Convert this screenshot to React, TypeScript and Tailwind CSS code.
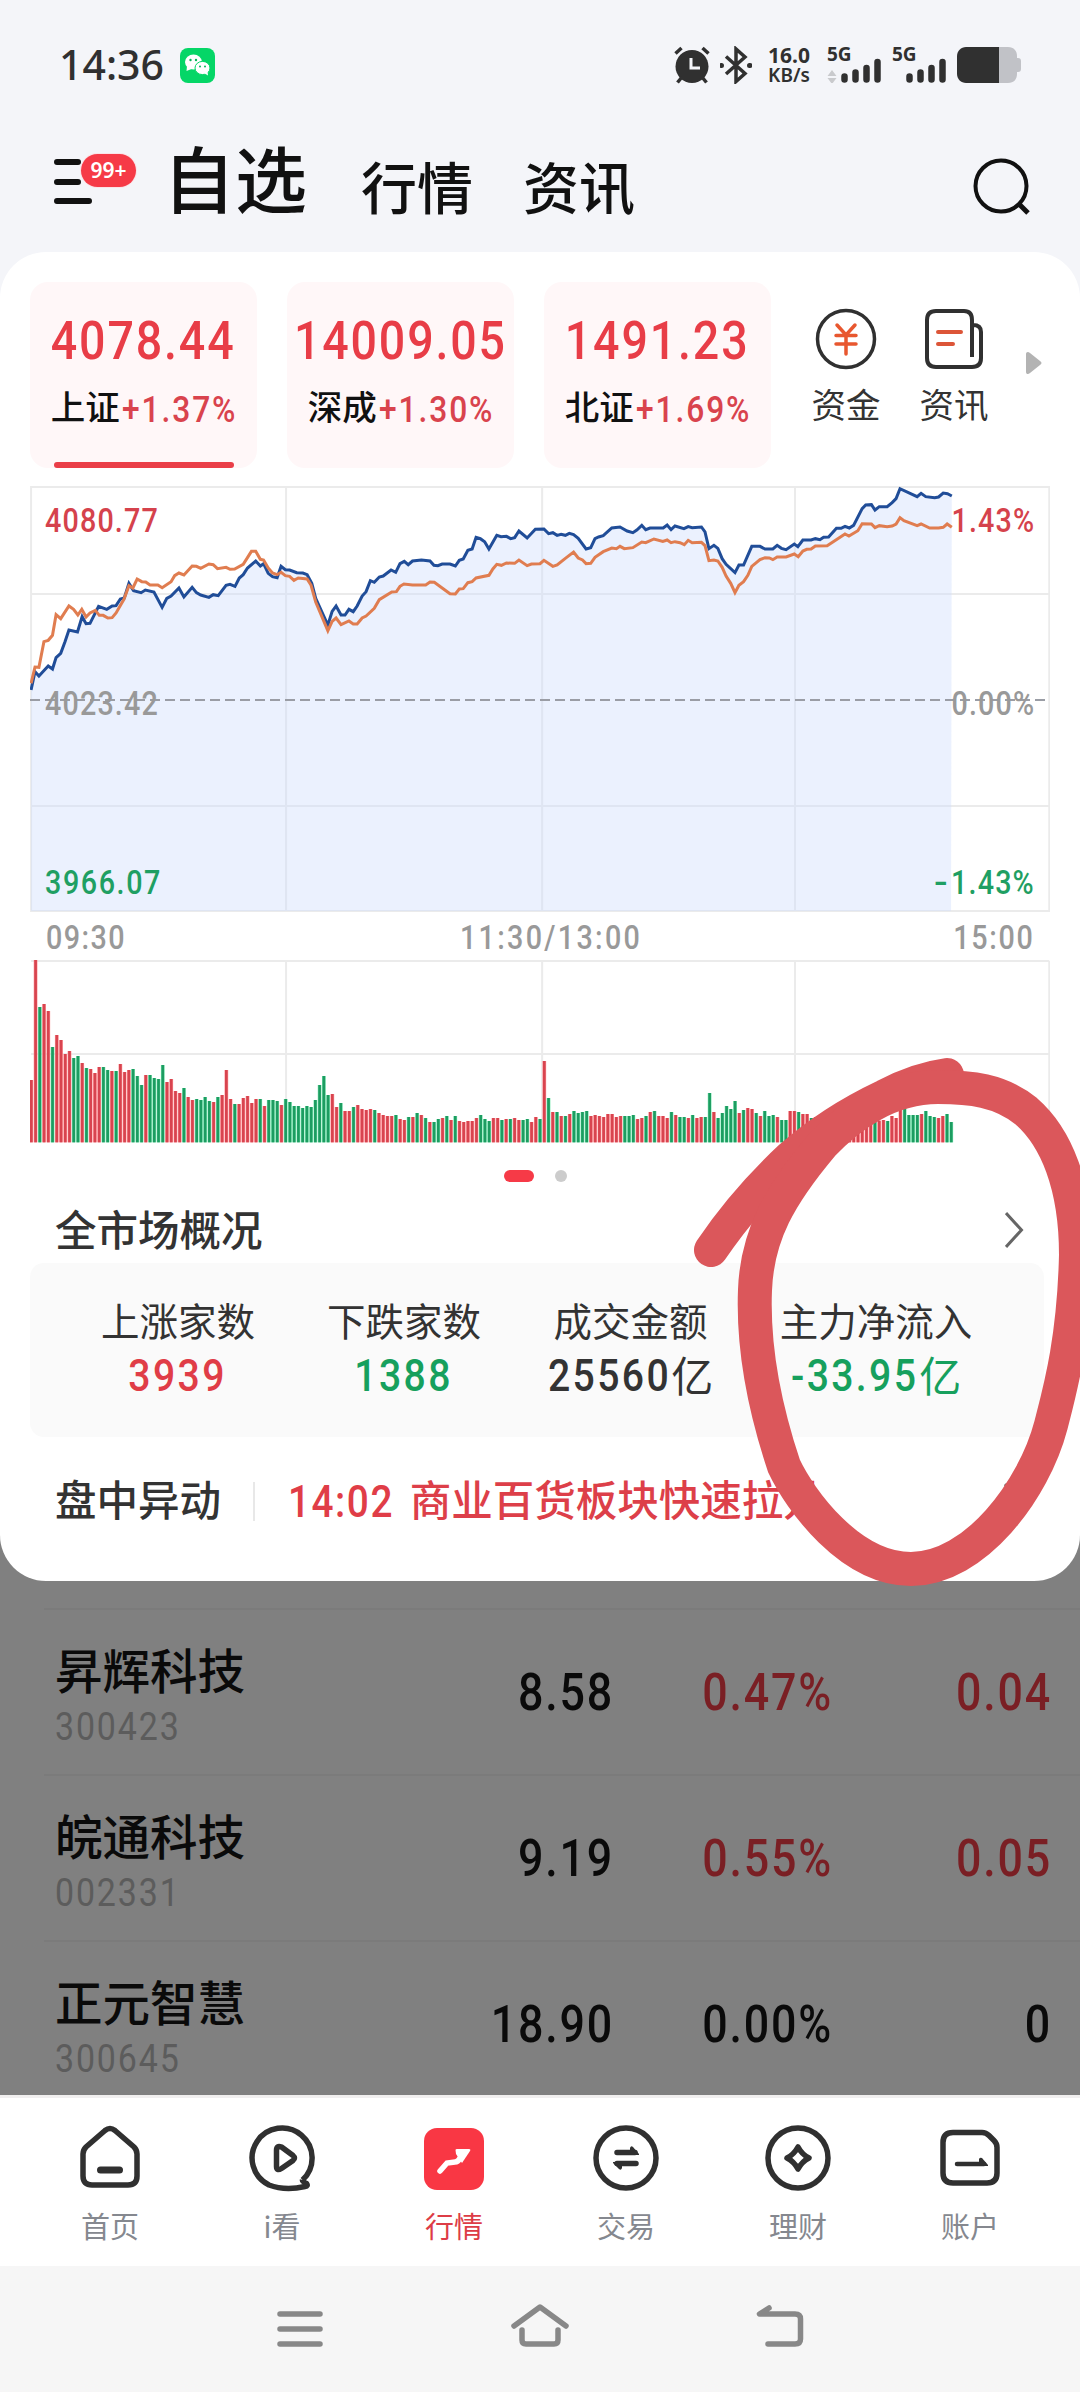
import type { ReactNode } from 'react';
import clsx from 'clsx';

type Point = [number, number];

// chart space: 2.8 units per px horizontally, 3 per px vertically
const NOON_OFFSET = 1456;
const MINUTE = 11.87;
const VOLUME_BASE = 637;

const BLUE_AM: Point[] = [
  [87, 660], [98, 605], [109, 618], [122, 603], [135, 588], [147, 597], [157, 563], [170, 550], [182, 515], [193, 480],
  [217, 486], [230, 440], [241, 461], [252, 460], [276, 409], [299, 418], [314, 408], [325, 407], [337, 387], [348, 384],
  [361, 340], [374, 362], [395, 368], [407, 360], [431, 366], [454, 412], [467, 385], [479, 378], [501, 354], [515, 381],
  [538, 352], [550, 368], [562, 375], [585, 382], [597, 374], [611, 377], [633, 346], [644, 343], [658, 349], [670, 324],
  [681, 314], [693, 294], [716, 273], [729, 288], [738, 281], [751, 310], [763, 320], [776, 323], [787, 289], [799, 299],
  [811, 300], [831, 308], [848, 309], [860, 314], [873, 340], [884, 385], [918, 465], [930, 424], [941, 408], [955, 435],
  [966, 435], [977, 418], [989, 425], [1000, 408], [1014, 378], [1025, 365], [1037, 332], [1048, 337], [1062, 321],
  [1073, 318], [1095, 300], [1108, 307], [1120, 281], [1132, 274], [1143, 284], [1155, 273], [1180, 270], [1204, 273],
  [1215, 286], [1226, 287], [1238, 282], [1260, 282], [1275, 288], [1286, 271], [1297, 267], [1310, 241], [1322, 237],
  [1333, 202], [1345, 206], [1357, 215], [1369, 237], [1391, 196], [1403, 200], [1418, 199], [1430, 206], [1441, 203],
  [1453, 183], [1476, 204], [1499, 178], [1523, 177], [1536, 191],
];

const BLUE_PM: Point[] = [
  [92, 188], [104, 196], [115, 193], [127, 196], [138, 190], [150, 194], [163, 205], [185, 237], [198, 233], [210, 206],
  [220, 201], [233, 197], [257, 174], [280, 171], [300, 183], [316, 188], [327, 180], [341, 166], [352, 179], [364, 174],
  [401, 174], [412, 165], [423, 179], [434, 168], [459, 176], [471, 170], [482, 173], [508, 171], [518, 186], [529, 236],
  [543, 226], [554, 235], [566, 266], [577, 283], [602, 308], [613, 285], [626, 285], [649, 229], [672, 229], [686, 237],
  [708, 237], [720, 226], [732, 235], [745, 239], [768, 222], [778, 230], [792, 210], [815, 210], [827, 206], [840, 209],
  [850, 202], [864, 201], [886, 175], [899, 175], [910, 169], [922, 174], [934, 166], [958, 116], [968, 105], [984, 104],
  [994, 120], [1006, 110], [1028, 110], [1042, 98], [1053, 86], [1064, 56], [1112, 80], [1123, 70], [1136, 80],
  [1161, 83], [1172, 81], [1185, 69], [1197, 71], [1209, 78],
];

const ORANGE_AM: Point[] = [
  [87, 640], [98, 591], [109, 592], [123, 515], [135, 511], [147, 496], [157, 434], [170, 446], [193, 408], [206, 418],
  [218, 435], [229, 418], [241, 441], [252, 429], [267, 421], [278, 436], [289, 436], [302, 444], [314, 443], [325, 429],
  [347, 388], [361, 347], [372, 354], [384, 327], [397, 335], [408, 336], [420, 345], [442, 345], [454, 353], [479, 335],
  [489, 317], [501, 309], [515, 315], [538, 288], [550, 289], [562, 295], [585, 282], [597, 284], [609, 296], [633, 292],
  [644, 298], [657, 297], [681, 283], [704, 244], [716, 244], [729, 268], [738, 270], [751, 294], [763, 309], [776, 314],
  [787, 307], [799, 317], [811, 319], [823, 331], [835, 324], [860, 327], [871, 346], [884, 396], [918, 482], [930, 454],
  [941, 444], [955, 464], [977, 453], [989, 462], [1000, 462], [1014, 444], [1025, 438], [1048, 415], [1062, 389],
  [1097, 366], [1110, 365], [1120, 349], [1131, 342], [1155, 345], [1192, 345], [1204, 336], [1216, 337], [1260, 371],
  [1275, 372], [1286, 357], [1297, 356], [1310, 338], [1322, 335], [1333, 324], [1369, 316], [1380, 297], [1391, 283],
  [1404, 286], [1418, 279], [1441, 280], [1453, 270], [1476, 287], [1488, 282], [1512, 281], [1523, 271], [1548, 289],
];

const ORANGE_PM: Point[] = [
  [104, 285], [127, 265], [150, 246], [163, 264], [175, 270], [185, 281], [198, 280], [210, 262], [233, 245], [257, 234],
  [270, 236], [280, 229], [292, 236], [316, 233], [341, 216], [352, 218], [375, 207], [400, 214], [412, 210], [423, 218],
  [434, 215], [448, 218], [460, 224], [471, 211], [482, 218], [508, 217], [518, 227], [529, 272], [543, 270], [554, 273],
  [566, 292], [577, 318], [590, 340], [602, 368], [613, 346], [626, 335], [638, 316], [649, 289], [672, 269], [686, 263],
  [698, 264], [708, 269], [720, 261], [745, 261], [768, 252], [779, 260], [792, 243], [803, 238], [815, 237], [827, 228],
  [860, 227], [910, 192], [921, 198], [946, 182], [958, 161], [984, 162], [994, 173], [1006, 167], [1028, 170],
  [1042, 168], [1053, 162], [1064, 143], [1075, 152], [1112, 167], [1123, 162], [1147, 174], [1172, 174], [1185, 172],
  [1196, 162], [1209, 172],
];

// top edge of every minute bar, negative for a falling minute
const VOLUME = [
  450, 90, -231, 222, 243, -351, 315, 330, 372, 363, -384, -378, 399, -414, 417, 429, 411, -411, -420, 423, -423, 402,
  426, 420, -417, -438, -465, 435, -435, -444, -447, -405, 456, 447, 483, 489, -474, 501, 510, -507, -510, -501, -513,
  516, -501, 495, 420, 507, -522, 522, 504, 498, 519, 507, -507, 528, -510, -510, -513, 525, -507, -516, -528, -528,
  -534, -528, -531, -510, -465, -438, -495, 492, 531, -519, 543, 543, -531, 525, 537, 540, 537, -540, 549, 555, 558,
  558, -555, 567, 570, -561, 561, -549, 555, -564, 576, -576, -567, 564, -558, 570, -558, 573, 576, 573, 573, 564,
  -555, -567, -573, 564, 564, -570, 567, -567, 564, 570, -570, -567, 576, 561, -567, 393, -504, 546, -546, 558, -558,
  552, -543, -549, -546, -543, 558, 555, 558, 561, 552, 552, 561, 558, -558, -558, -555, 567, 564, -558, 546, -543, 558,
  558, 564, -546, 555, -561, -561, 564, -555, 564, 561, -561, -489, 546, -564, -549, -528, -537, -513, 549, -540, 534,
  537, -549, 558, -543, -558, -555, 561, -570, -570, 543, 543, -546, 552, 552, -564, 561, 570, -573, -570, 565, 570,
  573, 570, 575, 575, 570, 573, 572, 571, -570, 572, 570, -573, 558, 564, 535, -530, -555, -555, -555, 552, -543, -558,
  -561, 564, 558, -552, -576,
];

const join = (am: Point[], pm: Point[]) =>
  [...am, ...pm.map(([x, y]) => [x + NOON_OFFSET, y])].map((p) => p.join(',')).join(' ');

const BLUE = join(BLUE_AM, BLUE_PM);
const ORANGE = join(ORANGE_AM, ORANGE_PM);

const INDEXES = [
  { name: '上证', value: '4078.44', change: '+1.37%', active: true },
  { name: '深成', value: '14009.05', change: '+1.30%', active: false },
  { name: '北证', value: '1491.23', change: '+1.69%', active: false },
];

const MARKET = [
  { label: '上涨家数', value: '3939', unit: '', color: 'text-[#e03d47]', width: 'w-[226px]' },
  { label: '下跌家数', value: '1388', unit: '', color: 'text-[#16a05d]', width: 'w-[226px]' },
  { label: '成交金额', value: '25560', unit: '亿', color: 'text-[#333]', width: 'w-[227px]' },
  { label: '主力净流入', value: '-33.95', unit: '亿', color: 'text-[#16a05d]', width: 'w-[264px]' },
];

const STOCKS = [
  { name: '昇辉科技', code: '300423', price: '8.58', pct: '0.47%', diff: '0.04', up: true },
  { name: '皖通科技', code: '002331', price: '9.19', pct: '0.55%', diff: '0.05', up: true },
  { name: '正元智慧', code: '300645', price: '18.90', pct: '0.00%', diff: '0', up: false },
];

function Num({ className, tracking, children }: { className?: string; tracking?: string; children: ReactNode }) {
  return (
    <span
      className={clsx(
        "inline-block scale-x-[0.87] font-['Roboto',sans-serif] whitespace-nowrap",
        tracking ?? 'tracking-[0.040em]',
        className,
      )}
    >
      {children}
    </span>
  );
}

function Signal({ arrows }: { arrows?: boolean }) {
  return (
    <div className="relative h-[36px] w-[56px]">
      <span className="absolute top-0 left-[2px] font-['Noto_Sans',sans-serif] text-[19px] leading-[15px] font-bold text-[#303030]">
        5G
      </span>
      <svg className="absolute inset-0" width="56" height="36" viewBox="0 0 56 36">
        {arrows && <path d="M2.500 29l4.500-6 4.500 6zM2.500 31h9l-4.500 6z" fill="#c9cacd" />}
        <g stroke="#303030" strokeWidth="6.500" strokeLinecap="round">
          <path d="M19.500 29.500v3M30.500 25.500v7M41.500 21v11.500M52.500 15v17.500" />
        </g>
      </svg>
    </div>
  );
}

function StatusBar() {
  return (
    <div className="flex h-[130px] items-center pr-[59px] pl-[59px]">
      <span className="mb-[2px] font-['Noto_Sans',sans-serif] text-[41px] leading-none font-medium text-[#303030]">
        14:36
      </span>
      <svg className="ml-[16px]" width="35" height="35" viewBox="0 0 35 35">
        <rect width="35" height="35" rx="8" fill="#05d667" />
        <ellipse cx="13.500" cy="14" rx="8.500" ry="7.500" fill="#fff" />
        <path d="M7 18l-0.500 5 5-2z" fill="#fff" />
        <ellipse cx="22.500" cy="20" rx="7.500" ry="6.600" fill="#fff" stroke="#05d667" />
        <path d="M24 25l4 2.500-0.500-4z" fill="#fff" />
        <g fill="#05b558">
          <circle cx="10.500" cy="12" r="1.200" />
          <circle cx="16" cy="12" r="1.200" />
          <circle cx="20" cy="18.500" r="1" />
          <circle cx="25" cy="18.500" r="1" />
        </g>
      </svg>
      <div className="ml-auto flex items-center">
        <svg width="38" height="38" viewBox="0 0 38 38" fill="none" stroke="#303030">
          <circle cx="19" cy="20.500" r="16.500" fill="#303030" stroke="none" />
          <path d="M2.500 7.500l6-5.500M35.500 7.500l-6-5.500M9 31l-4.500 5.500M29 31l4.500 5.500" strokeWidth="3.500" />
          <path d="M18 12v10h9" stroke="#f4f5f9" strokeWidth="3" />
        </svg>
        <svg className="ml-[9px]" width="32" height="38" viewBox="0 0 32 38" fill="none" stroke="#303030" strokeWidth="3.500">
          <path d="M6 10.500l19 17-9 8V3l9 8L6 28" />
          <path d="M1 19.500h0.500M29.500 19.500h0.500" strokeWidth="5" strokeLinecap="round" />
        </svg>
        <div className="mr-[1px] ml-[14px] w-[46px] text-center font-['Noto_Sans',sans-serif] text-[#303030]">
          <div className="text-[21px] leading-[20px] font-bold">16.0</div>
          <div className="text-[19px] leading-[20px] font-semibold">KB/s</div>
        </div>
        <div className="ml-[12px]">
          <Signal arrows />
        </div>
        <div className="ml-[9px]">
          <Signal />
        </div>
        <svg className="ml-[11px]" width="64" height="36" viewBox="0 0 64 36">
          <path d="M42 0h9c6 0 9 4 9 9v2h1c2 0 3 1 3 3v8c0 2-1 3-3 3h-1v2c0 5-3 9-9 9h-9z" fill="#c1c2c7" />
          <path d="M42 0v36H9c-5 0-9-4-9-9V9c0-5 4-9 9-9z" fill="#303030" />
        </svg>
      </div>
    </div>
  );
}

function Header() {
  return (
    <div className="flex h-[122px] items-start pl-[54px] text-[#111]">
      <div className="relative mt-[24px] w-[109px]">
        <svg width="60" height="56" viewBox="0 0 60 56" stroke="#111" strokeWidth="6" strokeLinecap="round">
          <path d="M3 8h21M3 28h21M3 47h32" />
        </svg>
        <span className="absolute top-0 left-[27px] flex h-[33px] w-[55px] items-center justify-center rounded-full bg-[#f63a47] font-['Noto_Sans',sans-serif] text-[21px] leading-none font-semibold text-white ring-1 ring-[#fbe3e7]">
          99+
        </span>
      </div>
      <span className="mt-[10px] text-[72px] leading-none font-medium">自选</span>
      <span className="mt-[27px] ml-[54px] text-[56px] leading-none font-medium">行情</span>
      <span className="mt-[27px] ml-[50px] text-[56px] leading-none font-medium">资讯</span>
      <svg className="mt-[27px] mr-[49px] ml-auto" width="60" height="60" viewBox="0 0 60 60" fill="none" stroke="#111" strokeWidth="4">
        <circle cx="30" cy="29" r="25.500" />
        <path d="M48 47l9 9" strokeWidth="5" />
      </svg>
    </div>
  );
}

function IndexCards() {
  return (
    <div className="flex h-[186px] gap-[30px] pl-[30px]">
      {INDEXES.map((item) => (
        <div
          key={item.name}
          className="relative flex w-[227px] shrink-0 flex-col items-center rounded-[18px] bg-[#fff7f8] pt-[32px]"
        >
          <Num className="text-[53.500px] leading-none font-medium text-[#e83d47]">{item.value}</Num>
          <div className="mt-[20px] flex items-start text-[34.500px] leading-none font-medium text-[#111]">
            <span>{item.name}</span>
            <Num
              className="mt-[4px] -mr-[18px] ml-[2px] origin-left text-[36.500px] leading-none text-[#d9434d]"
              tracking="tracking-[0.060em]"
            >
              {item.change}
            </Num>
          </div>
          {item.active && <div className="absolute bottom-0 h-[6px] w-[180px] rounded-full bg-[#ea3e48]" />}
        </div>
      ))}
      <div className="-ml-[10px] flex flex-1 pt-[26px] text-[34.500px] leading-none text-[#333]">
        <div className="flex w-[110px] flex-col items-center">
          <svg width="62" height="62" viewBox="0 0 62 62" fill="none">
            <circle cx="31" cy="31" r="28.500" stroke="#303030" strokeWidth="3.500" />
            <g stroke="#e8572f" strokeWidth="3.500" strokeLinecap="round">
              <path d="M22 17l9 10 9-10M21 27.500h20M21 36h20M31 27v19" />
            </g>
          </svg>
          <span className="mt-[16px]">资金</span>
        </div>
        <div className="flex w-[106px] flex-col items-center">
          <svg width="62" height="62" viewBox="0 0 62 62" fill="none" stroke="#303030" strokeWidth="4">
            <path d="M49 49V12c0-6-3-9-8-9H13c-6 0-9 3-9 9v38c0 6 3 9 9 9h36c6 0 9-3 9-9V24c0-5-3-7-8-7" />
            <path d="M15 24h23M15 36h15" stroke="#dc5538" strokeLinecap="round" />
          </svg>
          <span className="mt-[16px]">资讯</span>
        </div>
        <svg className="mt-[43px] ml-[18px]" width="18" height="24" viewBox="0 0 18 24">
          <path d="M1 3c0-2 2-3 4-1l10 8c2 1 2 3 0 4L5 22c-2 2-4 1-4-1z" fill="#b3b3b3" />
        </svg>
      </div>
    </div>
  );
}

function PriceChart() {
  return (
    <div className="relative mt-[18px] ml-[30px] h-[426px] w-[1020px] text-[33px] leading-none font-medium">
      <svg width="1020" height="426" viewBox="84 48 2856 1278" preserveAspectRatio="none" fill="none">
        <g stroke="#ebebeb" strokeWidth="2">
          <path
            d="M87 51H2938V1323H87zM87 372H2938M87 1008H2938M801 51V1323M1518 51V1323M2226 51V1323"
            vectorEffect="non-scaling-stroke"
          />
        </g>
        <polygon points={`87,1323 ${BLUE} 2663,1323`} fill="#ccdcfc" fillOpacity="0.400" />
        <path d="M84 690H2940" stroke="#9a9da5" strokeWidth="2" strokeDasharray="10 5" vectorEffect="non-scaling-stroke" />
        <polyline points={BLUE} stroke="#204d98" strokeWidth="3" vectorEffect="non-scaling-stroke" />
        <polyline points={ORANGE} stroke="#e07d50" strokeWidth="3" vectorEffect="non-scaling-stroke" />
      </svg>
      <Num className="absolute top-[18px] left-[15px] origin-left text-[#d5424c]">4080.77</Num>
      <Num className="absolute top-[201px] left-[15px] origin-left text-[#999]">4023.42</Num>
      <Num className="absolute top-[380px] left-[15px] origin-left text-[#1f9f63]" tracking="tracking-[0.055em]">
        3966.07
      </Num>
      <Num className="absolute top-[18px] right-[15px] origin-right text-[#d5424c]">1.43%</Num>
      <Num className="absolute top-[201px] right-[15px] origin-right text-[#999]">0.00%</Num>
      <Num className="absolute top-[380px] right-[15px] origin-right text-[#1f9f63]">
        <span className="mr-[2px] inline-block origin-right scale-x-[1.400]">-</span>
        1.43%
      </Num>
    </div>
  );
}

function VolumeChart() {
  return (
    <svg className="ml-[30px]" width="1020" height="183" viewBox="84 90 2856 549" preserveAspectRatio="none" fill="none">
      <path
        d="M87 93H2938M87 372H2938M801 93V637M1518 93V637M2226 93V637M2938 93V637"
        stroke="#ebebeb"
        strokeWidth="2"
        vectorEffect="non-scaling-stroke"
      />
      {VOLUME.map((v, i) => {
        const x = 84 + i * MINUTE;
        const y = Math.abs(v);
        return (
          <g key={i} fill={v > 0 ? '#d8444f' : '#1d9c61'}>
            <rect x={x - 1.5} y={y} width="10.500" height={VOLUME_BASE - y} fill={v > 0 ? '#ff9a9e' : '#7fe8b4'} />
            <rect x={x} y={y} width="7.500" height={VOLUME_BASE - y} />
          </g>
        );
      })}
    </svg>
  );
}

function MarketPanel() {
  return (
    <div className="bg-[linear-gradient(#f4f5f9_50%,#808080_50%)]">
      <div className="h-[1329px] rounded-[46px] bg-white pt-[30px]">
        <IndexCards />
        <PriceChart />
        <div className="mr-[45px] ml-[46px] flex h-[48px] items-center pt-[2px] text-[33px] leading-none font-medium text-[#999]">
          <Num className="origin-left" tracking="tracking-[0.050em]">
            09:30
          </Num>
          <Num className="mr-auto ml-[322px] origin-left" tracking="tracking-[0.080em]">
            11:30/13:00
          </Num>
          <Num className="origin-right" tracking="tracking-[0.060em]">
            15:00
          </Num>
        </div>
        <VolumeChart />
        <div className="mt-[27px] flex h-[12px] items-center gap-[21px] pl-[504px]">
          <span className="h-[12px] w-[30px] rounded-full bg-[#f63a47]" />
          <span className="h-[12px] w-[12px] rounded-full bg-[#ccc]" />
        </div>
        <div className="flex h-[81px] items-start justify-between pt-[26px] pr-[55px] pl-[55px] text-[#333]">
          <span className="text-[41.500px] leading-none font-medium">全市场概况</span>
          <svg className="mt-[3px]" width="20" height="38" viewBox="0 0 20 38" fill="none" stroke="#666" strokeWidth="3">
            <path d="M1 2l15.500 17L1 36" />
          </svg>
        </div>
        <div className="ml-[30px] flex h-[174px] w-[1014px] rounded-[14px] bg-[#fafafa] pt-[37px] pl-[35px]">
          {MARKET.map((item) => (
            <div key={item.label} className={clsx('flex shrink-0 flex-col items-center', item.width)}>
              <span className="text-[38.500px] leading-none text-[#333]">{item.label}</span>
              <div className={clsx('mt-[14px] flex items-start text-[42px] leading-none', item.color)}>
                <Num
                  className={clsx('text-[45px] leading-none font-medium', item.unit && '-mr-[18px] origin-left')}
                  tracking="tracking-[0.060em]"
                >
                  {item.value}
                </Num>
                {item.unit && <span>{item.unit}</span>}
              </div>
            </div>
          ))}
        </div>
        <div className="flex items-start pt-[41px] pr-[56px] pl-[55px] text-[41.500px] leading-none font-medium">
          <span className="text-[#333]">盘中异动</span>
          <span className="mt-[4px] ml-[32px] h-[39px] w-[2px] bg-[#e8e8e8]" />
          <Num
            className="mt-[2px] -mr-[17px] ml-[33px] origin-left text-[44.500px] leading-none text-[#e03d47]"
            tracking="tracking-[0.040em]"
          >
            14:02
          </Num>
          <span className="ml-[17px] text-[#dd3f49]">商业百货板块快速拉升</span>
          <svg className="mt-[4px] ml-auto" width="20" height="38" viewBox="0 0 20 38" fill="none" stroke="#666" strokeWidth="3">
            <path d="M1 2l15.500 17L1 36" />
          </svg>
        </div>
      </div>
    </div>
  );
}

function StockList() {
  return (
    <div className="h-[514px] overflow-hidden bg-[#808080] pt-[27px]">
      {STOCKS.map((stock) => (
        <div key={stock.code} className="ml-[44px] flex h-[166px] border-t-2 border-[#7b7b7b] pt-[35px] pl-[11px]">
          <div className="w-[250px]">
            <div className="text-[47.500px] leading-none font-medium text-[#0a0a0a]">{stock.name}</div>
            <Num className="mt-[15px] origin-left text-[39px] leading-none text-[#5c5c5c]" tracking="tracking-[0.055em]">
              {stock.code}
            </Num>
          </div>
          <div
            className={clsx(
              'flex pt-[22px] text-right text-[51.500px] leading-none font-medium',
              stock.up ? 'text-[#7a1f24]' : 'text-[#0a0a0a]',
            )}
          >
            <Num className="w-[309px] origin-right text-[#0a0a0a]">{stock.price}</Num>
            <Num className="w-[219px] origin-right">{stock.pct}</Num>
            <Num className="w-[219px] origin-right">{stock.diff}</Num>
          </div>
        </div>
      ))}
    </div>
  );
}

const TABS = [
  {
    label: '首页',
    icon: (
      <>
        <path d="M28 8.500q5-4 10 0L57 25q3 3 3 7v22q0 9-9 9H15q-9 0-9-9V32q0-4 3-7z" />
        <path d="M23.500 48h19" strokeWidth="7" strokeLinecap="round" />
      </>
    ),
  },
  {
    label: 'i看',
    icon: (
      <>
        <path
          d="M53.500 58A30 30 0 1 0 20 63Q36 69 56 64.500Q59.500 64 57.500 61.500Q53 59.500 53.500 58"
          strokeLinejoin="round"
        />
        <path d="M27.500 28q0-5 5-3L44 33.500q3 2.500 0 5L32.500 46.500q-5 3-5-2z" />
      </>
    ),
  },
  {
    label: '行情',
    active: true,
    icon: (
      <>
        <rect x="3" y="6" width="60" height="62" rx="13" fill="#f93744" stroke="none" />
        <path d="M19 49l7-8 8-1q3 0 5-4l3-5" stroke="#fff" strokeLinecap="round" />
        <path d="M34.500 28q0-1 1.500-1h12q2 0 1 2l-8 12-6-9z" fill="#fff" stroke="none" />
      </>
    ),
  },
  {
    label: '交易',
    icon: (
      <>
        <circle cx="33" cy="36" r="30" />
        <path d="M24 30.500h18M24 41.500h19" strokeLinecap="round" />
        <path d="M37 28v-2q1-3 3-1l6 7v1h-9zM29 44v2q-1 3-3 1l-6-6v-1h9z" fill="#303030" stroke="none" />
      </>
    ),
  },
  {
    label: '理财',
    icon: (
      <>
        <circle cx="33" cy="36" r="30" />
        <path d="M33 25q4 7.500 11 11q-7 3.500-11 11q-4-7.500-11-11q7-3.500 11-11z" strokeLinejoin="round" />
      </>
    ),
  },
  {
    label: '账户',
    icon: (
      <>
        <path d="M16 10.500h29q4 0 7 3l5 5q3 3 3 7V51q0 10-10 10H16q-10 0-10-10V20.500q0-10 10-10z" />
        <path d="M20 42h27" strokeLinecap="round" strokeWidth="4.500" />
        <path d="M42 41v-4q1-2 3-1l6 7v1h-8z" fill="#303030" stroke="none" />
      </>
    ),
  },
];

function TabBar() {
  return (
    <div className="flex h-[171px] border-t-[3px] border-[#f1efef] bg-white px-[24px] pt-[24px]">
      {TABS.map((tab) => (
        <div key={tab.label} className="flex flex-1 flex-col items-center">
          <svg width="66" height="74" viewBox="0 0 66 74" fill="none" stroke="#303030" strokeWidth="5.500">
            {tab.icon}
          </svg>
          <span className={clsx('mt-[15px] text-[29px] leading-none', tab.active ? 'text-[#dd3c46]' : 'text-[#85888f]')}>
            {tab.label}
          </span>
        </div>
      ))}
    </div>
  );
}

function SystemNav() {
  return (
    <div className="flex h-[126px] items-start justify-between bg-[#f6f6f6] px-[264px] pt-[30px]">
      <svg width="72" height="64" viewBox="0 0 72 64" stroke="#888" strokeWidth="5.500" strokeLinecap="round">
        <path d="M16 18h40M16 33h40M16 48h40" />
      </svg>
      <svg width="72" height="64" viewBox="0 0 72 64" fill="none" stroke="#888" strokeWidth="5.500" strokeLinecap="round" strokeLinejoin="round">
        <path d="M10 30L36 11L62 30" />
        <path d="M18 34v10q0 4 4 4h28q4 0 4-4V34" />
      </svg>
      <svg width="72" height="64" viewBox="0 0 72 64" fill="none" stroke="#888" strokeWidth="5.500" strokeLinecap="round" strokeLinejoin="round">
        <path d="M25 12L15.500 18H51q5.500 0 5.500 5v20q0 5-5.500 5H24" />
      </svg>
    </div>
  );
}

function Annotation() {
  return (
    <svg
      className="pointer-events-none absolute inset-0"
      width="1080"
      height="2392"
      viewBox="0 0 1080 2392"
      fill="none"
      stroke="#db575b"
      strokeWidth="34"
      strokeLinecap="round"
      strokeLinejoin="round"
    >
      <path d="M947 1075Q917 1079 885 1096Q830 1122 790 1158Q745 1200 711 1250" />
      <path d="M938 1087C970 1087 1000 1090 1026 1111C1056 1137 1076 1185 1076 1255C1074 1340 1060 1390 1051 1425C1034 1490 975 1569 911 1569C850 1569 800 1500 784 1466C762 1400 753 1340 755 1290C757 1235 780 1195 822 1145C850 1115 890 1087 938 1087z" />
    </svg>
  );
}

function App() {
  return (
    <div className="relative h-[2392px] w-[1080px] overflow-hidden bg-[#f4f5f9] font-['Noto_Sans_CJK_SC',sans-serif]">
      <StatusBar />
      <Header />
      <MarketPanel />
      <StockList />
      <TabBar />
      <SystemNav />
      <Annotation />
    </div>
  );
}

export default App;
